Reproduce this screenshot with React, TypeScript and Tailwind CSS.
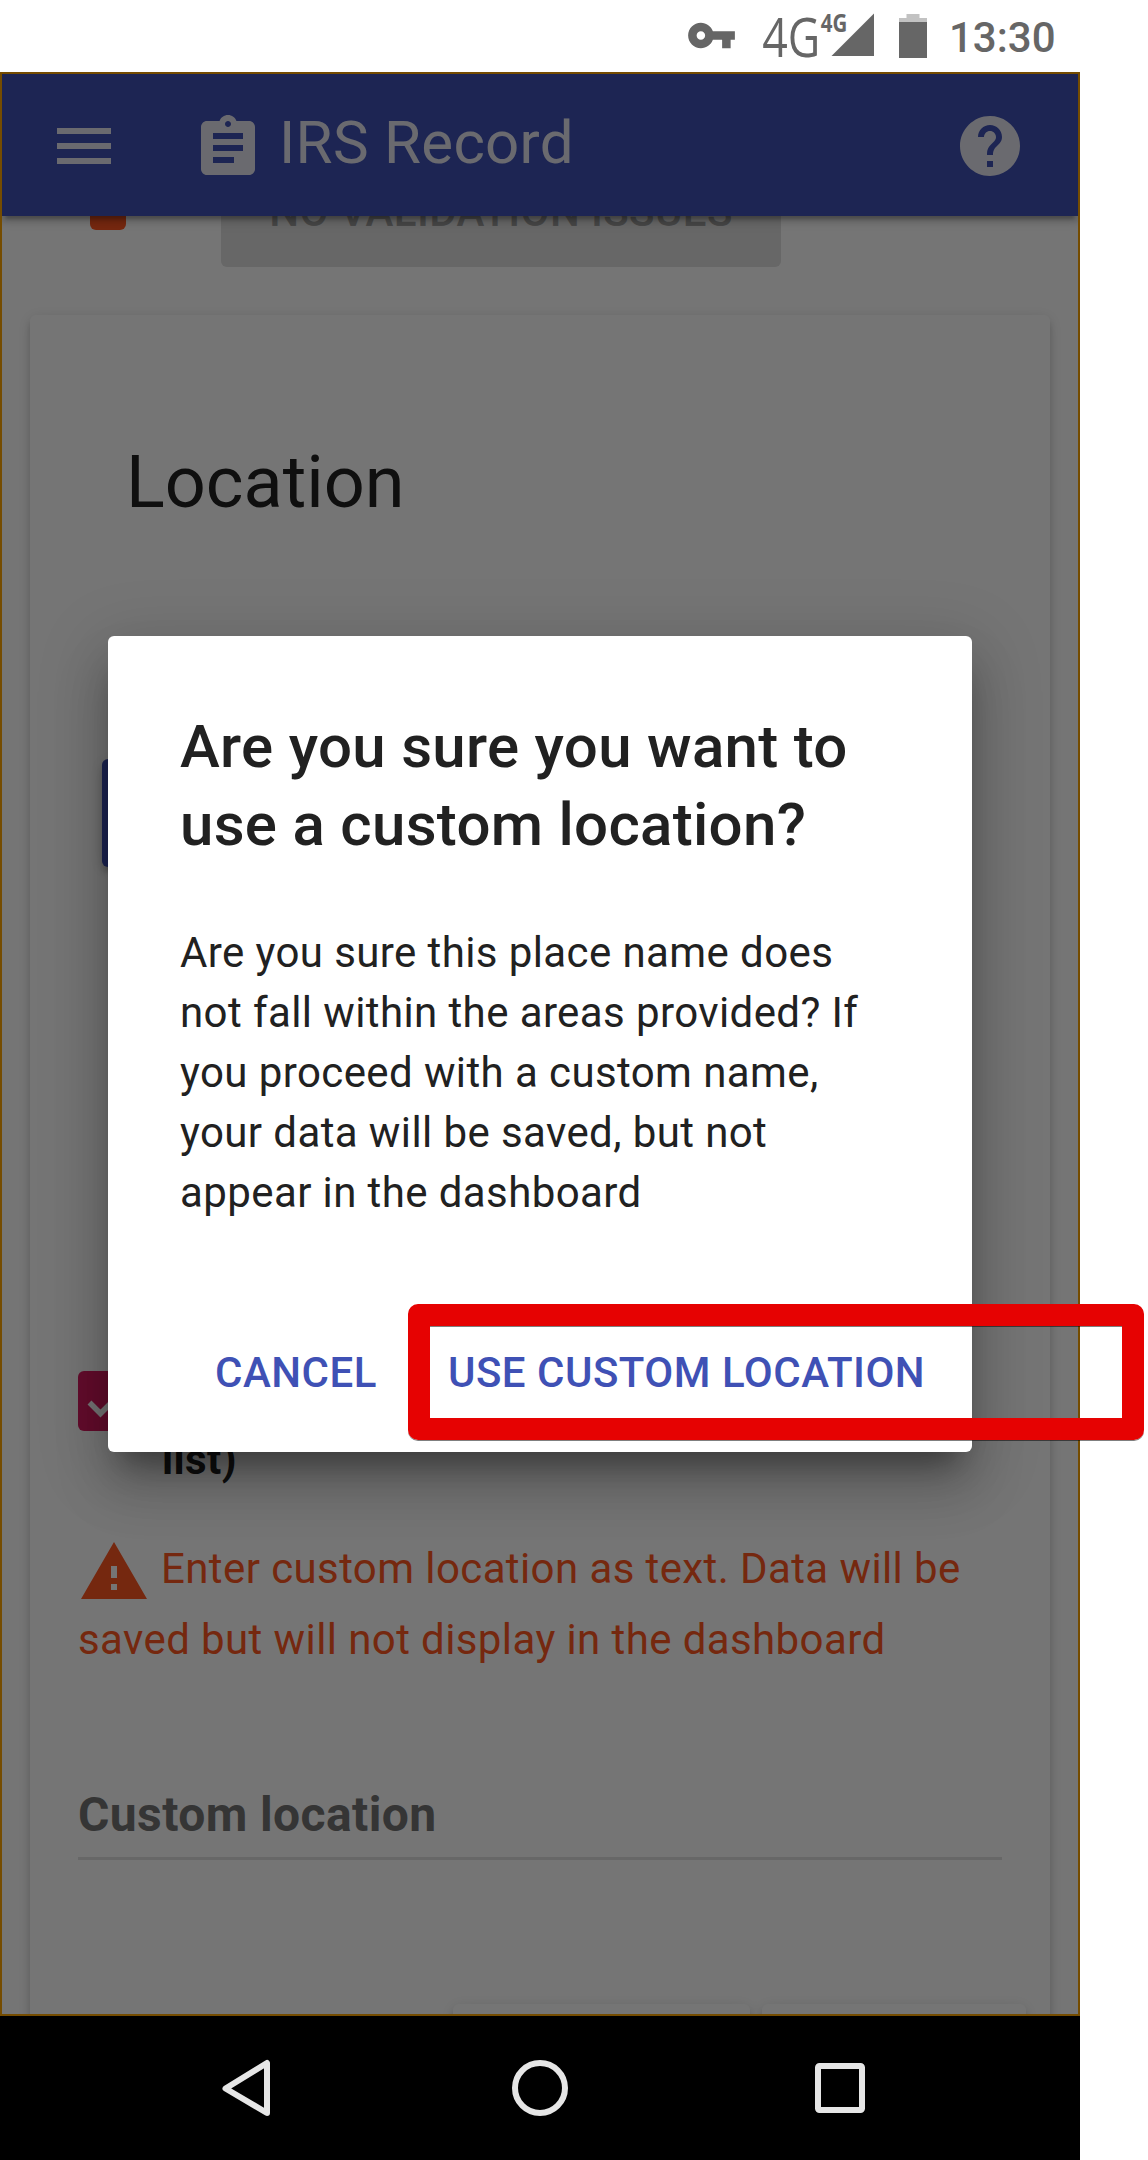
import React from "react";

function StatusBar() {
  return (
    <div className="flex h-[72px] items-start bg-white pl-[686px] text-[#666666]">
      <svg className="mt-[10px] h-[51px] w-[51px] shrink-0" viewBox="0 0 24 24" fill="currentColor">
        <path d="M12.65 10C11.83 7.67 9.61 6 7 6c-3.31 0-6 2.69-6 6s2.69 6 6 6c2.61 0 4.83-1.67 5.65-4H17v4h4v-4h2v-4H12.65zM7 14c-1.1 0-2-.9-2-2s.9-2 2-2 2 .9 2 2-.9 2-2 2z" />
      </svg>
      <svg className="ml-[21px] h-[72px] w-[118px] shrink-0 font-['Open_Sans']" viewBox="758 0 118 72" fill="currentColor">
        <text x="762.2" y="56.5" fontSize="55" textLength="58" lengthAdjust="spacingAndGlyphs">4G</text>
        <text x="820.7" y="32.2" fontSize="24.5" fontWeight="700" textLength="26.5" lengthAdjust="spacingAndGlyphs">4G</text>
        <path d="M874 13.5V56H831.5Z" />
      </svg>
      <svg className="ml-[23px] h-[72px] w-[28px] shrink-0" viewBox="0 0 28 72" fill="currentColor">
        <path fill="#c2c2c2" d="M7.500 14h13v4H28v4H0v-4h7.500z" />
        <path d="M0 22h28v36H0z" />
      </svg>
      <span className="mt-[8px] ml-[22px] text-[42px] leading-[60px] font-medium">13:30</span>
    </div>
  );
}

function AppBar() {
  return (
    <header className="relative z-10 flex h-[144px] items-start bg-[#3f51b5] pl-[48px] text-[#e8e8f2] shadow-[0_6px_6px_0_rgba(0,0,0,.14),0_3px_15px_0_rgba(0,0,0,.12),0_9px_3px_-6px_rgba(0,0,0,.2)]">
      <svg className="mt-[38px] h-[72px] w-[72px]" viewBox="0 0 24 24" fill="currentColor">
        <path d="M3 18h18v-2H3v2zm0-5h18v-2H3v2zm0-7v2h18V6H3z" />
      </svg>
      <svg className="mt-[40px] ml-[72px] h-[72px] w-[72px]" viewBox="0 0 24 24" fill="currentColor">
        <path d="M19 3h-4.180C14.400 1.840 13.300 1 12 1c-1.300 0-2.400.84-2.820 2H5c-1.100 0-2 .9-2 2v14c0 1.100.9 2 2 2h14c1.100 0 2-.9 2-2V5c0-1.100-.9-2-2-2zm-7 0c.55 0 1 .45 1 1s-.45 1-1 1-1-.45-1-1 .45-1 1-1zm2 14H7v-2h7v2zm3-4H7v-2h10v2zm0-4H7V7h10v2z" />
      </svg>
      <h1 className="mt-[32px] ml-[15px] text-[60px] leading-[78px] tracking-[.3px]">IRS Record</h1>
      <svg className="mt-[38px] mr-[54px] ml-auto h-[72px] w-[72px]" viewBox="0 0 24 24" fill="currentColor">
        <path d="M12 2C6.480 2 2 6.480 2 12s4.480 10 10 10 10-4.480 10-10S17.520 2 12 2zm1 17h-2v-2h2v2zm2.070-7.750l-.9.920C13.450 12.900 13 13.500 13 15h-2v-.5c0-1.100.450-2.100 1.170-2.830l1.240-1.260c.37-.36.59-.86.59-1.410 0-1.100-.9-2-2-2s-2 .9-2 2H8c0-2.210 1.790-4 4-4s4 1.790 4 4c0 .880-.36 1.680-.93 2.250z" />
      </svg>
    </header>
  );
}

function LocationForm() {
  return (
    <main className="flex flex-col">
      <div className="flex h-[51px] items-start pl-[90px]">
        <div className="-mt-[22px] h-[36px] w-[36px] rounded-[6px] bg-[#ff5722]" />
        <div className="-mt-[57px] ml-[95px] flex h-[108px] w-[560px] items-center justify-center rounded-[6px] bg-[#e0e0e0] pb-[4px] text-[42px] font-medium tracking-[.4px] whitespace-nowrap text-[#9b9b9b]">
          NO VALIDATION ISSUES
        </div>
      </div>

      <section className="mt-[48px] ml-[30px] h-[1800px] w-[1020px] rounded-[6px] bg-white shadow-[0_6px_6px_0_rgba(0,0,0,.14),0_3px_15px_0_rgba(0,0,0,.12),0_9px_3px_-6px_rgba(0,0,0,.2)]">
        <h2 className="pt-[120px] pl-[96px] text-[72px] leading-[96px] text-[#212121]">Location</h2>
        <div className="mt-[228px] ml-[72px] h-[108px] w-[500px] rounded-[6px] bg-[#3f51b5] shadow-[0_6px_6px_0_rgba(0,0,0,.14),0_3px_15px_0_rgba(0,0,0,.12),0_9px_3px_-6px_rgba(0,0,0,.2)]" />

        <div className="mt-[504px] ml-[48px] flex h-[118px] items-start">
          <svg className="h-[60px] w-[60px]" viewBox="0 0 60 60" fill="none">
            <rect width="60" height="60" rx="6" fill="#d81b60" />
            <path d="M11.500 31.500L22.500 42.500L48 17" stroke="#fff" strokeWidth="5.500" />
          </svg>
          <span className="mt-[59px] ml-[24px] text-[42px] leading-[60px] font-bold tracking-[.42px] text-[#212121]">list)</span>
        </div>

        <p className="mt-[44px] ml-[48px] w-[924px] text-[42px] leading-[71px] tracking-[.4px] text-[#ff5722]">
          <span className="float-left mt-[3px] mr-[11px] h-[66px] w-[72px]">
            <svg className="h-[72px] w-[72px]" viewBox="0 0 24 24" fill="currentColor">
              <path d="M1 21h22L12 2 1 21zm12-3h-2v-2h2v2zm0-4h-2v-4h2v4z" />
            </svg>
          </span>
          Enter custom location as text. Data will be
          <br />
          saved but will not display in the dashboard
        </p>

        <div className="mt-[104px] ml-[48px] w-[924px] border-b-[3px] border-[#e0e0e0] pb-[6px] text-[48px] leading-[72px] font-bold tracking-[.4px] text-[#757575]">
          Custom location
        </div>

        <div className="mt-[144px] ml-[423px] flex gap-[12px]">
          <div className="h-[108px] w-[297px] rounded-[6px] bg-white shadow-[0_6px_6px_0_rgba(0,0,0,.14),0_3px_15px_0_rgba(0,0,0,.12),0_9px_3px_-6px_rgba(0,0,0,.2)]" />
          <div className="h-[108px] w-[264px] rounded-[6px] bg-white shadow-[0_6px_6px_0_rgba(0,0,0,.14),0_3px_15px_0_rgba(0,0,0,.12),0_9px_3px_-6px_rgba(0,0,0,.2)]" />
        </div>
      </section>
    </main>
  );
}

function ConfirmDialog() {
  return (
    <div className="absolute inset-0 z-20 flex items-center justify-center border-2 border-[#754c00] bg-black/54">
      <div className="flex h-[816px] w-[864px] flex-col rounded-[6px] bg-white px-[72px] pt-[72px] text-[#212121] shadow-[0_36px_54px_3px_rgba(0,0,0,.14),0_14px_66px_12px_rgba(0,0,0,.12),0_24px_30px_-15px_rgba(0,0,0,.4)]">
        <h2 className="text-[60px] leading-[78px] font-medium tracking-[.3px]">
          Are you sure you want to
          <br />
          use a custom location?
        </h2>
        <p className="mt-[59px] text-[42px] leading-[60px] tracking-[.4px]">
          Are you sure this place name does
          <br />
          not fall within the areas provided? If
          <br />
          you proceed with a custom name,
          <br />
          your data will be saved, but not
          <br />
          appear in the dashboard
        </p>
        <div className="mt-[120px] -mr-[60px] flex gap-[71px] pl-[35px] text-[42px] leading-[60px] font-medium tracking-[.5px] whitespace-nowrap text-[#3f51b5]">
          <button>CANCEL</button>
          <button>USE CUSTOM LOCATION</button>
        </div>
      </div>
    </div>
  );
}

function NavBar() {
  return (
    <nav className="flex h-[144px] items-center bg-black pl-[219px]">
      <svg className="h-[60px] w-[54px]" viewBox="0 0 54 60" fill="none" stroke="#e6e6e6" strokeWidth="6" strokeLinejoin="round">
        <path d="M48 5V55L6.500 30.500Z" />
      </svg>
      <svg className="ml-[237px] h-[60px] w-[60px]" viewBox="0 0 60 60" fill="none" stroke="#e6e6e6" strokeWidth="6">
        <circle cx="30" cy="30" r="25" />
      </svg>
      <svg className="ml-[242px] h-[56px] w-[56px]" viewBox="0 0 56 56" fill="none" stroke="#e6e6e6" strokeWidth="6">
        <rect x="6" y="6" width="44" height="44" rx="1.500" />
      </svg>
    </nav>
  );
}

export default function App() {
  return (
    <div className="relative h-[2160px] w-[1148px] overflow-hidden bg-white font-[Roboto,sans-serif]">
      <div className="flex w-[1080px] flex-col">
        <StatusBar />
        <div className="relative h-[1944px] overflow-hidden bg-white">
          <AppBar />
          <LocationForm />
          <ConfirmDialog />
        </div>
        <NavBar />
      </div>
      <div className="absolute top-[1304px] left-[408px] z-30 h-[136px] w-[736px] rounded-[10px] border-[22px] border-[#e60202] shadow-[0_1px_0_0_rgba(0,0,0,.5),inset_0_1px_0_0_rgba(0,0,0,.5)]" />
    </div>
  );
}
